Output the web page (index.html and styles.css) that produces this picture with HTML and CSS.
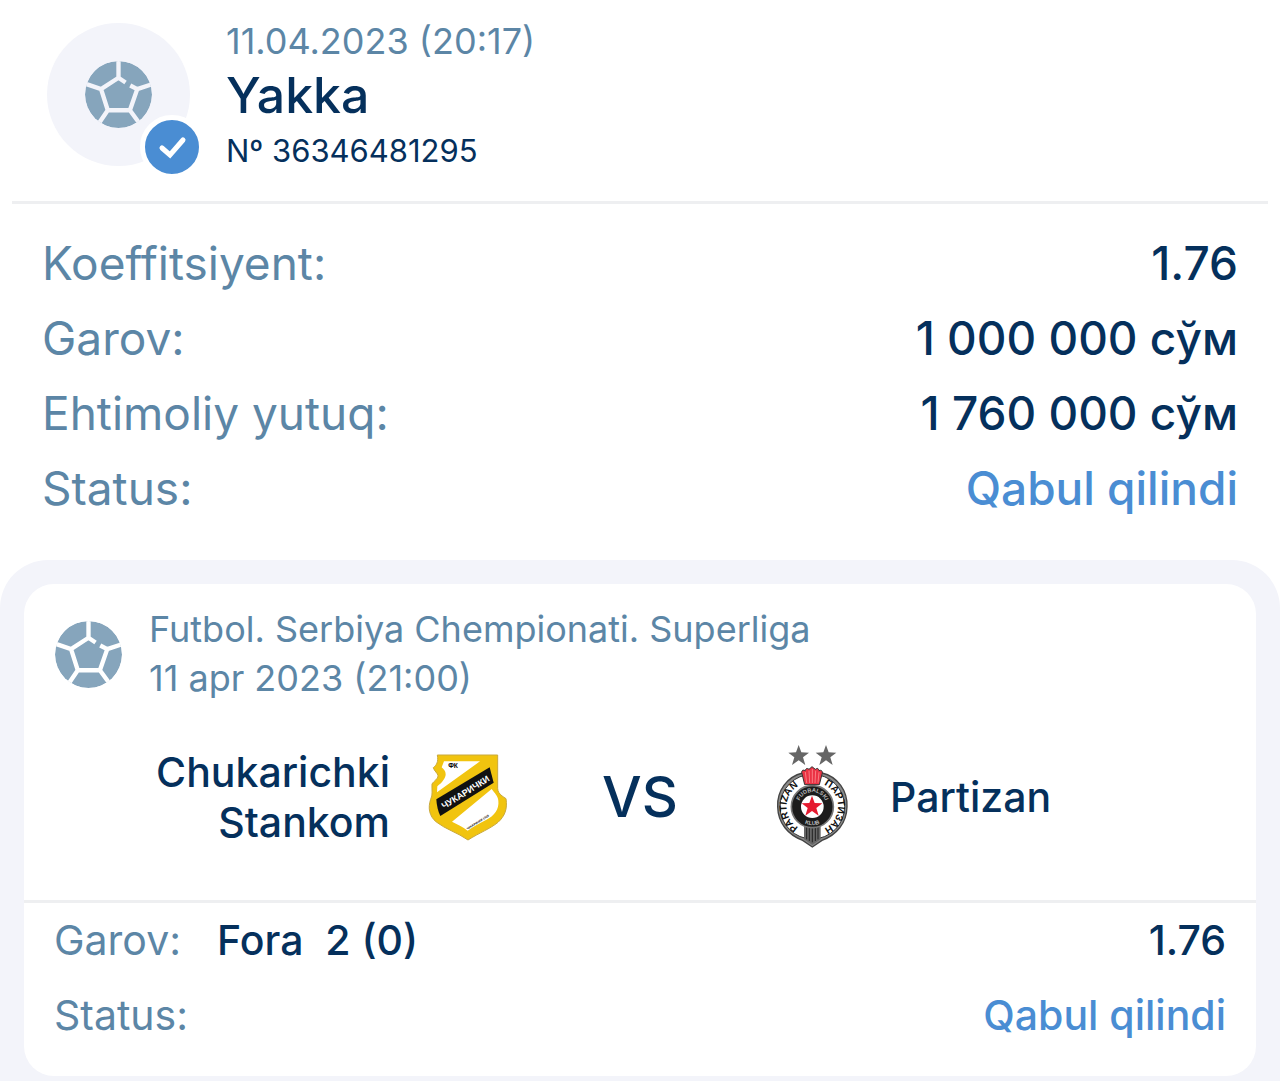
FILE: index.html
```html
<!DOCTYPE html>
<html lang="uz">
<head>
    <meta charset="UTF-8">
    <meta name="viewport" content="width=device-width, initial-scale=1.0">
    <title>Yakka № 36346481295</title>
    <link rel="stylesheet" href="styles.css">
</head>
<body>
    <svg class="sprite" aria-hidden="true">
        <symbol id="ball" viewBox="0 0 200 200">
            <circle cx="100" cy="100" r="100" fill="#86a5bc"/>
            <path d="M100 -4V50M-4 66L48 84L100 50L121 64M135 73L156 84L204 68M156 84L134 147H68L48 84M68 147L40 188M134 147L164 188" fill="none" stroke="currentColor" stroke-width="13"/>
        </symbol>
    </svg>

    <header class="header">
        <div class="avatar">
            <svg class="ball"><use href="#ball"/></svg>
            <span class="badge">
                <svg viewBox="0 0 54 54"><path d="M17 28L25 35L38 20" fill="none" stroke="#fff" stroke-width="5" stroke-linecap="round"/></svg>
            </span>
        </div>
        <div class="header-text">
            <div class="date">11.04.2023 (20:17)</div>
            <h1>Yakka</h1>
            <div class="number">Nº 36346481295</div>
        </div>
    </header>

    <dl class="summary">
        <div class="row"><dt>Koeffitsiyent:</dt><dd>1.76</dd></div>
        <div class="row"><dt>Garov:</dt><dd>1 000 000 сўм</dd></div>
        <div class="row"><dt>Ehtimoliy yutuq:</dt><dd>1 760 000 сўм</dd></div>
        <div class="row"><dt>Status:</dt><dd class="accepted">Qabul qilindi</dd></div>
    </dl>

    <main class="events">
        <article class="card">
            <div class="league">
                <svg class="ball"><use href="#ball"/></svg>
                <div>
                    <div>Futbol. Serbiya Chempionati. Superliga</div>
                    <div>11 apr 2023 (21:00)</div>
                </div>
            </div>

            <div class="match">
                <div class="team home">
                    <span>Chukarichki Stankom</span>
                    <svg class="logo" viewBox="18 15 312 312" aria-hidden="true">
                        <path d="M82 45H263V145C263 155 268 162 279 170L288 176C293 207 284 229 264 247C241 266 207 279 174 300C143 278 107 268 79 246C58 229 53 204 62 178C69 166 65 148 66 132C72 122 84 118 84 107C83 99 73 94 70 83C79 76 86 66 82 45Z" fill="#f1c40f" stroke="#c9a93c" stroke-width="3"/>
                        <path d="M102 64H210L81 157L82 139C96 128 107 115 107 103C107 93 101 88 95 82Z" fill="#fff"/>
                        <path d="M245 147C254 159 264 169 265 182C268 207 253 227 228 240C211 249 192 258 173 272C158 260 142 253 126 245Z" fill="#fff"/>
                        <path d="M79 178L239 82L251 128L91 228C84 214 80 197 79 178Z" fill="#111"/>
                        <text class="crest-name" transform="translate(166 156) rotate(-32)" text-anchor="middle" y="10">ЧУКАРИЧКИ</text>
                        <text class="crest-top" x="129" y="84" text-anchor="middle">ФК</text>
                        <text class="crest-year" transform="translate(205 249) rotate(-32)" text-anchor="middle">ЧУКАРИЧКИ 1926</text>
                    </svg>
                </div>
                <div class="vs">VS</div>
                <div class="team">
                    <svg class="logo" viewBox="3 30 312 312" aria-hidden="true">
                        <defs>
                            <path id="ring-left" d="M126 281A72 72 0 0 1 126 149"/>
                            <path id="ring-right" d="M194 149A72 72 0 0 1 194 281"/>
                            <path id="inner-top" d="M120 221A41 41 0 1 1 200 221"/>
                            <path id="inner-bottom" d="M109 232A53 53 0 0 0 211 232"/>
                            <path id="star" d="M0 -33L8 -11L31 -10L13 4L20 27L0 13L-20 27L-13 4L-31 -10L-8 -11Z"/>
                        </defs>
                        <use href="#star" x="119" y="63" fill="#666"/>
                        <use href="#star" x="201" y="63" fill="#666"/>
                        <path d="M131 114C83 125 54 169 56 215C57 265 88 300 131 316L160 336L189 316C232 300 263 265 264 215C266 169 237 125 189 114Z" fill="#8a8a8a" stroke="#444" stroke-width="4"/>
                        <circle cx="160" cy="215" r="97" fill="#fff" stroke="#333" stroke-width="3"/>
                        <path d="M135 270H185V313L160 330L135 313Z" fill="#666"/>
                        <path d="M143 275V313M151 275V318M160 275V322M169 275V318M177 275V313" stroke="#222" stroke-width="3"/>
                        <circle cx="160" cy="215" r="63" fill="#1c1c1c" stroke="#777" stroke-width="5"/>
                        <circle cx="160" cy="215" r="34" fill="#fff"/>
                        <use href="#star" x="159" y="215" fill="#e51b30"/>
                        <path d="M137 149L128 112Q129 102 139 107Q141 96 150 103L159 95L169 103Q178 96 180 107Q190 103 190 114L181 149Z" fill="#eb3345" stroke="#333" stroke-width="3"/>
                        <path d="M143 144L139 111M152 144L150 107M160 144V102M168 144L170 107M177 143L180 112" stroke="#ffa0a0" stroke-width="2"/>
                        <g class="ring-text" text-anchor="middle">
                            <text><textPath href="#ring-left" startOffset="50%">PARTIZAN</textPath></text>
                            <text><textPath href="#ring-right" startOffset="50%">ПАРТИЗАН</textPath></text>
                        </g>
                        <g class="inner-text" text-anchor="middle">
                            <text><textPath href="#inner-top" startOffset="50%">FUDBALSKI</textPath></text>
                            <text><textPath href="#inner-bottom" startOffset="50%">KLUB</textPath></text>
                        </g>
                    </svg>
                    <span>Partizan</span>
                </div>
            </div>

            <dl class="bet">
                <div class="row">
                    <dt>Garov:</dt>
                    <dd class="pick">Fora&nbsp; 2 (0)</dd>
                    <dd>1.76</dd>
                </div>
                <div class="row"><dt>Status:</dt><dd class="accepted">Qabul qilindi</dd></div>
            </dl>
        </article>
    </main>
</body>
</html>
```
FILE: styles.css
```css
* {
    box-sizing: border-box;
}
body {
    margin: 0;
    min-height: 100vh;
    display: flex;
    flex-direction: column;
    font-family: Inter, "Noto Sans", sans-serif;
    background-color: #fff;
    color: #05305c;
}
dl, dd, h1 {
    margin: 0;
}
.sprite {
    display: none;
}
.header {
    display: flex;
    gap: 36px;
    margin: 0 12px;
    padding: 16px 35px 23px;
    border-bottom: 3px solid #eeeff1;
}
.avatar {
    position: relative;
    display: flex;
    align-items: center;
    justify-content: center;
    width: 143px;
    height: 143px;
    margin-top: 7px;
    border-radius: 50%;
    background-color: #f3f4fa;
    color: #f3f4fa;
}
.ball {
    flex: none;
    width: 67px;
    height: 67px;
    border-radius: 50%;
}
.badge {
    position: absolute;
    right: -14px;
    bottom: -13px;
    width: 64px;
    height: 64px;
    border: 5px solid #fff;
    border-radius: 50%;
    background-color: #4a8dd3;
}
.badge svg {
    display: block;
}
.date {
    font-size: 36px;
    line-height: 50px;
    color: #5c86a6;
}
h1 {
    font-size: 50px;
    line-height: 58px;
    font-weight: 500;
}
.number {
    font-size: 31px;
    line-height: 54px;
}
.summary {
    padding: 22px 42px 34px;
    font-size: 46px;
    line-height: 75px;
}
.row {
    display: flex;
    justify-content: space-between;
}
dt {
    color: #5c86a6;
}
dd {
    font-weight: 500;
}
.accepted {
    color: #4a8dd3;
}
.events {
    flex: 1;
    padding: 24px 24px 4px;
    border-radius: 48px 48px 0 0;
    background-color: #f3f4fa;
}
.card {
    border-radius: 30px;
    background-color: #fff;
}
.league {
    display: flex;
    align-items: center;
    gap: 27px;
    padding: 21px 31px;
    font-size: 36px;
    line-height: 49px;
    color: #5c86a6;
}
.league .ball {
    color: #fff;
}
.match {
    display: grid;
    grid-template-columns: 1fr 240px 1fr;
    align-items: center;
    padding: 21px 30px 51px;
    border-bottom: 3px solid #eeeff1;
}
.team {
    display: flex;
    align-items: center;
    gap: 26px;
    font-size: 41px;
    line-height: 50px;
    font-weight: 500;
}
.home {
    justify-content: flex-end;
    text-align: right;
}
.logo {
    flex: none;
    width: 104px;
    height: 104px;
}
.vs {
    font-size: 56px;
    font-weight: 500;
    text-align: center;
}
.crest-name {
    font: bold 27px "Liberation Sans", sans-serif;
    fill: #fff;
}
.crest-top {
    font: bold 20px "Liberation Sans", sans-serif;
}
.crest-year {
    font: bold 9px "Liberation Sans", sans-serif;
}
.ring-text {
    font: bold 30px "Liberation Sans", sans-serif;
    fill: #111;
}
.inner-text {
    font: bold 17px "Liberation Sans", sans-serif;
    fill: #bbb;
}
.bet {
    padding: 0 30px 23px;
    font-size: 41px;
    line-height: 75px;
}
.pick {
    flex: 1;
    padding-left: 36px;
}
```
